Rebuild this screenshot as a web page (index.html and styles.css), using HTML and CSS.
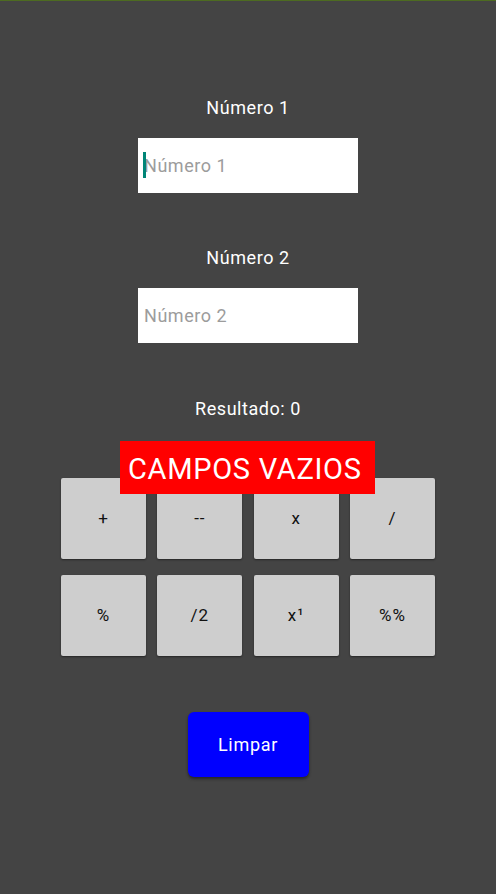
FILE: index.html
```html
<!DOCTYPE html>
<html lang="pt">
<head>
<meta charset="utf-8">
<title>Calculadora</title>
<link rel="stylesheet" href="styles.css">
</head>
<body>
<div class="screen">
  <div class="label first">Número 1</div>
  <div class="field"><span class="caret"></span><span class="ph">Número 1</span></div>
  <div class="label second">Número 2</div>
  <div class="field"><span class="ph">Número 2</span></div>
  <div class="result">Resultado: 0</div>
  <div class="pad">
    <div class="key">+</div>
    <div class="key">--</div>
    <div class="key">x</div>
    <div class="key">/</div>
    <div class="key">%</div>
    <div class="key">/2</div>
    <div class="key">x¹</div>
    <div class="key">%%</div>
  </div>
  <div class="clear">Limpar</div>
  <div class="toast">CAMPOS VAZIOS</div>
</div>
</body>
</html>
```
FILE: styles.css
```css
html, body {
  margin: 0;
  padding: 0;
  background: #444444;
}
body {
  font-family: Roboto, "Noto Sans", sans-serif;
  letter-spacing: 0.55px;
}
.screen {
  position: relative;
  width: 496px;
  height: 893px;
  border-top: 1px solid #4d6b21;
  display: flex;
  flex-direction: column;
  align-items: center;
  overflow: hidden;
}
.label {
  color: #ffffff;
  font-size: 18px;
  line-height: 21px;
  height: 21px;
}
.label.first { margin-top: 96px; }
.label.second { margin-top: 54px; }
.field {
  position: relative;
  margin-top: 19.5px;
  width: 220px;
  height: 55.5px;
  background: #ffffff;
  display: flex;
  align-items: center;
  padding-left: 6px;
  box-sizing: border-box;
}
.ph {
  color: #9c9c9c;
  font-size: 18px;
  line-height: 21px;
}
.caret {
  position: absolute;
  left: 5px;
  top: 14px;
  width: 3px;
  height: 26px;
  background: #008577;
}
.result {
  margin-top: 54.5px;
  color: #ffffff;
  font-size: 18px;
  line-height: 21px;
  height: 21px;
}
.pad {
  margin-top: 59.5px;
  width: 374px;
  display: grid;
  grid-template-columns: repeat(4, 85px);
  column-gap: 11.33px;
  row-gap: 16.5px;
}
.key {
  height: 80.5px;
  background: #cecece;
  border-radius: 2px;
  box-shadow: 0 1px 2px rgba(0, 0, 0, 0.45);
  color: #111111;
  font-size: 17px;
  letter-spacing: 1px;
  display: flex;
  align-items: center;
  justify-content: center;
}
.clear {
  margin-top: 56px;
  width: 121px;
  height: 65.5px;
  background: #0000ff;
  border-radius: 6px;
  box-shadow: 0 2px 3px rgba(0, 0, 0, 0.45);
  color: #ffffff;
  font-size: 18px;
  letter-spacing: 0.7px;
  display: flex;
  align-items: center;
  justify-content: center;
}
.toast {
  position: absolute;
  left: 120px;
  top: 440px;
  width: 255px;
  height: 53px;
  background: #ff0000;
  color: #ffffff;
  font-size: 29px;
  letter-spacing: 0.7px;
  line-height: 56px;
  padding-left: 8px;
  box-sizing: border-box;
  white-space: nowrap;
}
```
